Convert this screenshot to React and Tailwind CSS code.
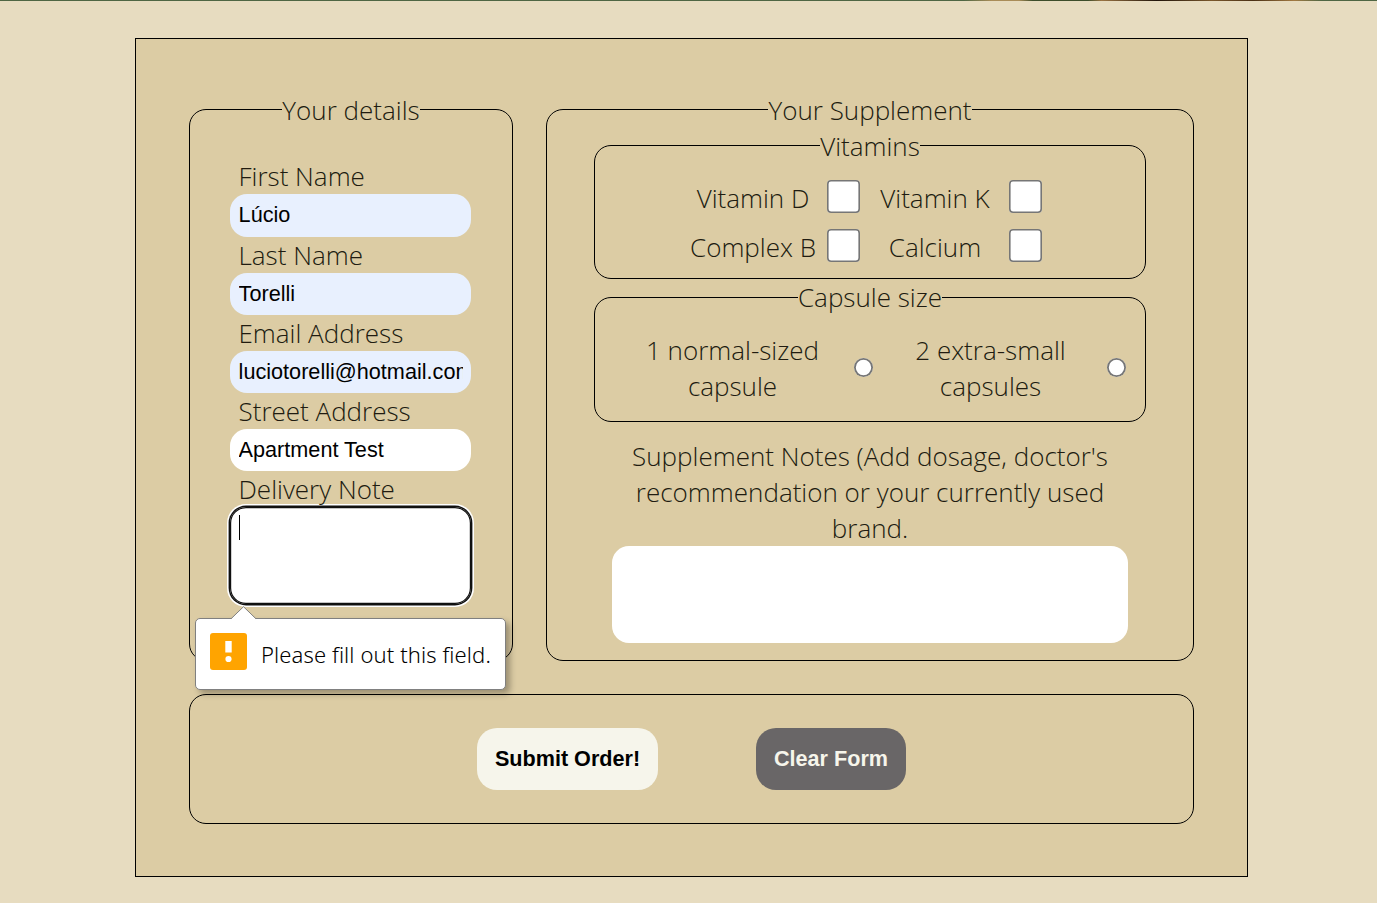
const VITAMINS = ["Vitamin D", "Vitamin K", "Complex B", "Calcium"];

const DETAILS = [
  { label: "First Name", value: "Lúcio", tint: "bg-[#e8f0fe]" },
  { label: "Last Name", value: "Torelli", tint: "bg-[#e8f0fe]" },
  { label: "Email Address", value: "luciotorelli@hotmail.com", tint: "bg-[#e8f0fe]" },
  { label: "Street Address", value: "Apartment Test", tint: "bg-white" },
];

function Group({ title, className, legendClass = "h-[35px]", children }) {
  return (
    <fieldset className={"min-w-0 rounded-[17px] border border-black " + className}>
      <legend className={"mx-auto whitespace-nowrap " + legendClass}>{title}</legend>
      {children}
    </fieldset>
  );
}

function Field({ label, value, tint }) {
  return (
    <div className="flex h-[78.15px] flex-col">
      <label className="h-9 pl-[8.5px]">{label}</label>
      <input
        type="text"
        defaultValue={value}
        className={
          "h-[42.15px] w-[241px] rounded-[17px] pl-[8.6px] pr-[8.4px] font-['Liberation_Sans',Arial,sans-serif] text-[21.65px] font-normal text-black " +
          tint
        }
      />
    </div>
  );
}

function Radio() {
  return <span className="mb-px size-[19px] shrink-0 rounded-full bg-white shadow-[inset_0_0_0_1.8px_#767676]" />;
}

function Tooltip() {
  return (
    <div className="absolute left-[195px] top-[618px] flex h-[72px] w-[311px] items-center rounded-[5px] border border-[#808080] bg-white pl-[14px] shadow-[4px_4px_6px_rgba(0,0,0,0.3)]">
      <svg className="absolute -top-[13px] left-[34px]" width="28" height="14" viewBox="0 0 28 14">
        <path d="M0.5 14 L1 13 L13.5 0.7 L26 13 L26.5 14 Z" fill="white" />
        <path d="M1 12.8 L13.5 0.7 L26 12.8" fill="none" stroke="#808080" />
      </svg>
      <svg className="mb-[5px] shrink-0" width="37" height="37" viewBox="0 0 37 37">
        <rect width="37" height="37" rx="3" fill="#ffa400" />
        <rect x="15.3" y="8" width="6.4" height="11.5" fill="white" />
        <circle cx="18.5" cy="26" r="3.1" fill="white" />
      </svg>
      <span className="mb-px ml-[14px] whitespace-nowrap font-['Noto_Sans',sans-serif] text-[22px] font-light leading-[30px] tracking-[0.11px] text-black">
        Please fill out this field.
      </span>
    </div>
  );
}

export default function App() {
  return (
    <div className="relative h-[903px] w-full overflow-hidden bg-[#e7dcc0] font-['Open_Sans',sans-serif] text-[26px] font-light leading-9 text-[#201b10]">
      <div className="h-px bg-[linear-gradient(90deg,#4f6643_0%,#4f6643_70%,#a98c58_72%,#a98c58_74%,#3d4d2a_75%,#3d4d2a_79%,#9a7443_80%,#21150a_84%,#7a582c_88%,#4a3014_91%,#a27a42_94%,#4f6643_96%)]" />
      <form className="ml-[135px] mt-[37px] flex h-[839px] w-[1113px] flex-col border border-black bg-[#dccca4] px-[53px] pt-[53px]">
        <div className="flex gap-[33px]">
          <Group title="Your details" className="h-[569px] w-[324px] px-[40px]">
            <div className="pt-[31.4px]">
              {DETAILS.map((f) => (
                <Field key={f.label} {...f} />
              ))}
              <label className="block h-9 pl-[8.5px]">Delivery Note</label>
              <div className="h-[97px] w-[241px] rounded-[16px] bg-white px-[9px] pt-[8px] shadow-[inset_0_0_0_1.2px_#101010,0_0_0_1.4px_#101010,0_0_0_3px_#fff]">
                <div className="h-[25px] w-px bg-black" />
              </div>
            </div>
          </Group>
          <Group title="Your Supplement" className="h-[569px] w-[648px] px-[47px]">
            <Group title="Vitamins" className="mt-px h-[151px] w-[552px]">
              <div className="grid grid-cols-[126px_32px_126px_32px] gap-x-3 pl-[95px] pt-[17px]">
                {VITAMINS.map((name) => (
                  <div key={name} className="contents">
                    <label className="h-[49px] whitespace-nowrap text-center">{name}</label>
                    <span className="-ml-[0.6px] size-[33px] rounded-[4px] bg-white shadow-[inset_0_0_0_1.6px_#767676]" />
                  </div>
                ))}
              </div>
            </Group>
            <Group title="Capsule size" className="h-[143px] w-[552px]" legendClass="h-9">
              <div className="flex items-center pl-[35px] pt-[17px] text-center">
                <label className="w-[205px]">1 normal-sized<br />capsule</label>
                <span className="ml-[19px] flex"><Radio /></span>
                <label className="ml-[15px] w-[205px]">2 extra-small<br />capsules</label>
                <span className="ml-[14px] flex"><Radio /></span>
              </div>
            </Group>
            <div className="mx-[18px] mt-[16px] text-center">
              <label className="block">
                Supplement Notes (Add dosage, doctor's
                <br />
                recommendation or your currently used
                <br />
                brand.
              </label>
              <div className="h-[97px] rounded-[17px] bg-white" />
            </div>
          </Group>
        </div>
        <div className="mt-[33px] flex h-[130px] items-start gap-[98px] rounded-[17px] border border-black pl-[287px] pt-[33px] font-['Liberation_Sans',Arial,sans-serif] text-[21.6px] font-bold leading-[60px]">
          <button type="button" className="h-[62px] w-[181px] whitespace-nowrap rounded-[20px] bg-[#f6f5eb] text-black">
            Submit Order!
          </button>
          <button type="button" className="h-[62px] w-[150px] whitespace-nowrap rounded-[20px] bg-[#696667] text-[#f6f5eb]">
            Clear Form
          </button>
        </div>
      </form>
      <Tooltip />
    </div>
  );
}
